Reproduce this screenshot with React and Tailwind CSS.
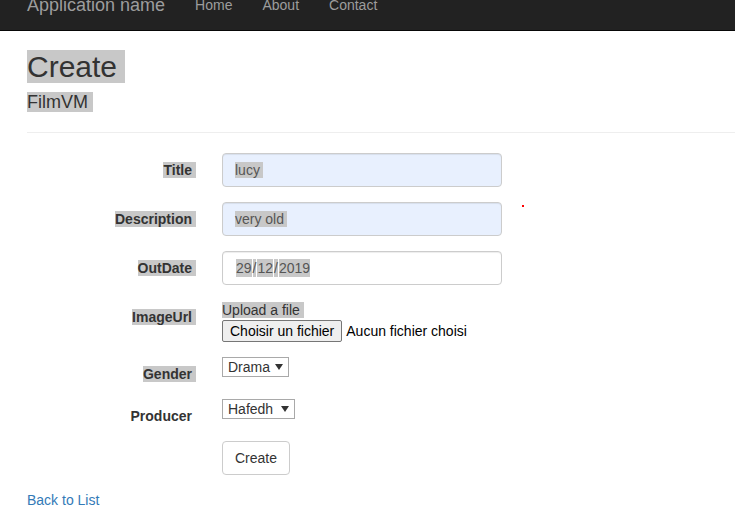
import React from "react";

const HL = "bg-[#c8c8c8]";

function Label({ children, hl = true }) {
  return (
    <div className="w-[165px] shrink-0 text-right font-bold pt-[7px] leading-[20px]">
      {hl ? <span className={`${HL} pr-[4px] -mr-[4px]`}>{children}</span> : <span>{children}</span>}
    </div>
  );
}

function Select({ value, width }) {
  return (
    <div
      className={`h-[20px] border border-[#a9a9a9] bg-white flex items-center pl-[5px] pr-[5px] text-[14px] leading-[18px] text-[#333] ${width}`}
    >
      <span className="flex-1">{value}</span>
      <svg width="8" height="6" viewBox="0 0 8 6" className="ml-[4px]">
        <path d="M0 0 L8 0 L4 6 Z" fill="#333" />
      </svg>
    </div>
  );
}

export default function App() {
  return (
    <div className="relative min-h-[509px] bg-white font-['Liberation_Sans',Arial,sans-serif] text-[14px] leading-[20px] text-[#333] overflow-hidden">
      {/* Navbar */}
      <div className="h-[31px] bg-[#222] border-b border-[#080808] overflow-hidden">
        <div className="-mt-[20px] h-[50px] flex items-start pl-[27px] text-[#9d9d9d]">
          <span className="pt-[15px] pr-[15px] text-[18px] leading-[20px]">Application name</span>
          <span className="pt-[15px] px-[15px] leading-[20px]">Home</span>
          <span className="pt-[15px] px-[15px] leading-[20px]">About</span>
          <span className="pt-[15px] px-[15px] leading-[20px]">Contact</span>
        </div>
      </div>

      {/* Main */}
      <div className="pl-[27px]">
        <h2 className="mt-[19px] text-[30px] leading-[33px] font-normal">
          <span className={`${HL} pr-[8px]`}>Create</span>
        </h2>
        <h4 className="mt-[9px] text-[18px] leading-[20px] font-normal">
          <span className={`${HL} pr-[5px]`}>FilmVM</span>
        </h4>
        <div className="mt-[20px] border-t border-[#eee]" />

        {/* Form */}
        <div className="mt-[20px] flex flex-col">
          {/* Title */}
          <div className="flex mb-[15px]">
            <Label>Title</Label>
            <div className="ml-[30px] w-[280px] h-[34px] border border-[#ccc] rounded-[4px] bg-[#e8f0fe] px-[12px] flex items-center text-[#555] shadow-[inset_0_1px_1px_rgba(0,0,0,0.075)]">
              <span className={`${HL} pr-[3px] leading-[16px]`}>lucy</span>
            </div>
          </div>
          {/* Description */}
          <div className="flex mb-[15px]">
            <Label>Description</Label>
            <div className="ml-[30px] w-[280px] h-[34px] border border-[#ccc] rounded-[4px] bg-[#e8f0fe] px-[12px] flex items-center text-[#555] shadow-[inset_0_1px_1px_rgba(0,0,0,0.075)]">
              <span className={`${HL} pr-[3px] leading-[16px]`}>very old</span>
            </div>
          </div>
          {/* OutDate */}
          <div className="flex mb-[15px]">
            <Label>OutDate</Label>
            <div className="ml-[30px] w-[280px] h-[34px] border border-[#ccc] rounded-[4px] bg-white px-[13px] flex items-center text-[#555] shadow-[inset_0_1px_1px_rgba(0,0,0,0.075)]">
              <div className="flex gap-[1px] leading-[18px]">
                <span className={HL}>29</span>
                <span className={HL}>/</span>
                <span className={HL}>12</span>
                <span className={HL}>/</span>
                <span className={HL}>2019</span>
              </div>
            </div>
          </div>
          {/* ImageUrl */}
          <div className="flex mb-[15px]">
            <Label>ImageUrl</Label>
            <div className="ml-[30px] flex flex-col">
              <div className="leading-[20px] text-[#333]">
                <span className={`${HL} pr-[4px]`}>Upload a file</span>
              </div>
              <div className="flex items-center h-[22px]">
                <div className="h-[22px] px-[7px] border border-[#767676] bg-[#efefef] rounded-[2px] flex items-center text-black leading-[18px]">
                  Choisir un fichier
                </div>
                <span className="ml-[4px] text-black">Aucun fichier choisi</span>
              </div>
            </div>
          </div>
          {/* Gender */}
          <div className="flex mb-[15px]">
            <Label>Gender</Label>
            <div className="ml-[30px]">
              <Select value="Drama" width="w-[67px]" />
            </div>
          </div>
          {/* Producer */}
          <div className="flex mb-[15px]">
            <Label hl={false}>Producer</Label>
            <div className="ml-[30px]">
              <Select value="Hafedh" width="w-[73px]" />
            </div>
          </div>
          {/* Create button */}
          <div className="flex mb-[15px]">
            <div className="w-[165px] shrink-0" />
            <div className="ml-[30px] h-[34px] px-[12px] border border-[#ccc] rounded-[4px] bg-white flex items-center text-[#333]">
              Create
            </div>
          </div>
        </div>

        <div className="leading-[20px] text-[#337ab7]">Back to List</div>
      </div>

      <span className="absolute left-[522px] top-[205px] w-[2px] h-[2px] bg-[#ff0000]" />
    </div>
  );
}
